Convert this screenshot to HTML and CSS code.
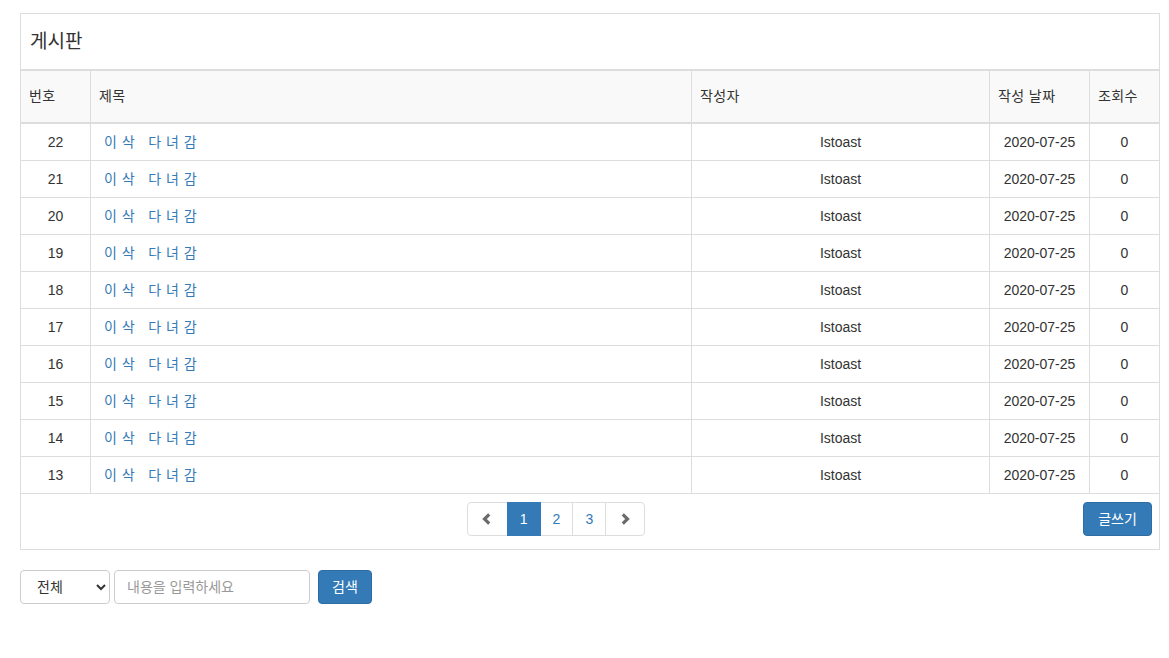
FILE: index.html
```html
<!DOCTYPE html>
<html lang="ko">
<head>
<meta charset="utf-8">
<title>게시판</title>
<link rel="stylesheet" href="styles.css">
</head>
<body>
<div class="page">
  <div class="panel">
    <div class="panel-heading">게시판</div>
    <table class="board">
      <thead>
        <tr>
          <th class="c-no">번호</th>
          <th class="c-title">제목</th>
          <th class="c-writer">작성자</th>
          <th class="c-date">작성 날짜</th>
          <th class="c-hit">조회수</th>
        </tr>
      </thead>
      <tbody>
        <tr><td class="center">22</td><td class="title"><a href="#">이 삭&nbsp;&nbsp; 다 녀 감</a></td><td class="center">Istoast</td><td class="center">2020-07-25</td><td class="center">0</td></tr>
        <tr><td class="center">21</td><td class="title"><a href="#">이 삭&nbsp;&nbsp; 다 녀 감</a></td><td class="center">Istoast</td><td class="center">2020-07-25</td><td class="center">0</td></tr>
        <tr><td class="center">20</td><td class="title"><a href="#">이 삭&nbsp;&nbsp; 다 녀 감</a></td><td class="center">Istoast</td><td class="center">2020-07-25</td><td class="center">0</td></tr>
        <tr><td class="center">19</td><td class="title"><a href="#">이 삭&nbsp;&nbsp; 다 녀 감</a></td><td class="center">Istoast</td><td class="center">2020-07-25</td><td class="center">0</td></tr>
        <tr><td class="center">18</td><td class="title"><a href="#">이 삭&nbsp;&nbsp; 다 녀 감</a></td><td class="center">Istoast</td><td class="center">2020-07-25</td><td class="center">0</td></tr>
        <tr><td class="center">17</td><td class="title"><a href="#">이 삭&nbsp;&nbsp; 다 녀 감</a></td><td class="center">Istoast</td><td class="center">2020-07-25</td><td class="center">0</td></tr>
        <tr><td class="center">16</td><td class="title"><a href="#">이 삭&nbsp;&nbsp; 다 녀 감</a></td><td class="center">Istoast</td><td class="center">2020-07-25</td><td class="center">0</td></tr>
        <tr><td class="center">15</td><td class="title"><a href="#">이 삭&nbsp;&nbsp; 다 녀 감</a></td><td class="center">Istoast</td><td class="center">2020-07-25</td><td class="center">0</td></tr>
        <tr><td class="center">14</td><td class="title"><a href="#">이 삭&nbsp;&nbsp; 다 녀 감</a></td><td class="center">Istoast</td><td class="center">2020-07-25</td><td class="center">0</td></tr>
        <tr><td class="center">13</td><td class="title"><a href="#">이 삭&nbsp;&nbsp; 다 녀 감</a></td><td class="center">Istoast</td><td class="center">2020-07-25</td><td class="center">0</td></tr>
      </tbody>
    </table>
    <div class="panel-footer">
      <div class="pager-wrap">
        <ul class="pagination">
          <li><a href="#" class="chev chev-prev"><svg width="12" height="12" viewBox="0 0 12 12"><path d="M8.2 1.3 L3.5 6 L8.2 10.7" fill="none" stroke="#6b6b6b" stroke-width="3.2"/></svg></a></li>
          <li><a href="#" class="num active">1</a></li>
          <li><a href="#" class="num">2</a></li>
          <li><a href="#" class="num">3</a></li>
          <li><a href="#" class="chev"><svg width="12" height="12" viewBox="0 0 12 12"><path d="M3.8 1.3 L8.5 6 L3.8 10.7" fill="none" stroke="#6b6b6b" stroke-width="3.2"/></svg></a></li>
        </ul>
      </div>
      <button class="btn btn-primary" type="button">글쓰기</button>
    </div>
  </div>
  <form class="search">
    <select class="field select">
      <option>전체</option>
    </select>
    <input class="field input" type="text" placeholder="내용을 입력하세요">
    <button class="btn btn-primary btn-search" type="button">검색</button>
  </form>
</div>
</body>
</html>
```

FILE: styles.css
```css
* { box-sizing: border-box; }
html, body { margin: 0; padding: 0; background: #fff; }
body {
  font-family: "Liberation Sans", "Noto Sans CJK KR", sans-serif;
  font-size: 14px;
  line-height: 20px;
  color: #333;
}
.page { padding: 13px 0 0 20px; }
.panel {
  width: 1140px;
  border: 1px solid #ddd;
  background: #fff;
}
.panel-heading {
  height: 57px;
  padding: 0 9px;
  display: flex;
  align-items: center;
  font-size: 19px;
  border-bottom: 2px solid #ddd;
}
.board {
  width: 1138px;
  table-layout: fixed;
  border-collapse: separate;
  border-spacing: 0;
}
.board th, .board td {
  border-right: 1px solid #ddd;
  line-height: 20px;
  font-weight: normal;
  text-align: left;
}
.board th:last-child, .board td:last-child { border-right: 0; }
.board th {
  background: #f9f9f9;
  padding: 15px 8px 16px;
  border-bottom: 2px solid #ddd;
  letter-spacing: 0.4px;
}
.board td {
  padding: 8px;
  border-bottom: 1px solid #ddd;
}
.c-no { width: 70px; }
.c-title { width: 601px; }
.c-writer { width: 298px; }
.c-date { width: 100px; }
.c-hit { width: 69px; }
.board td.center { text-align: center; }
.board td.title { padding-left: 13px; }
.board a { color: #337ab7; text-decoration: none; letter-spacing: 0.5px; }
.panel-footer {
  display: flex;
  align-items: flex-start;
  padding: 8px 7px 13px 8px;
  height: 55px;
}
.pager-wrap { flex: 1; display: flex; justify-content: center; }
.pagination {
  display: flex;
  list-style: none;
  margin: 0;
  padding: 0;
}
.pagination li a {
  display: flex;
  align-items: center;
  justify-content: center;
  height: 34px;
  padding: 6px 12px;
  margin-left: -1px;
  border: 1px solid #ddd;
  color: #337ab7;
  text-decoration: none;
  background: #fff;
}
.pagination li:first-child a { margin-left: 0; border-radius: 4px 0 0 4px; }
.pagination li:last-child a { border-radius: 0 4px 4px 0; }
.pagination li a.chev { width: 40px; padding: 6px 0; }
.pagination li a.chev-prev { width: 41px; }
.pagination li a.active {
  background: #337ab7;
  border-color: #337ab7;
  color: #fff;
  position: relative;
  z-index: 1;
}
.btn {
  font-family: inherit;
  font-size: 14px;
  line-height: 20px;
  height: 34px;
  padding: 6px 12px;
  border-radius: 4px;
  border: 1px solid transparent;
  cursor: pointer;
}
.btn-primary {
  background: #337ab7;
  border-color: #2e6da4;
  color: #fff;
}
.panel-footer .btn { width: 69px; padding: 6px 0; }
.search {
  display: flex;
  margin-top: 20px;
}
.field {
  height: 34px;
  border: 1px solid #ccc;
  border-radius: 4px;
  font-family: inherit;
  font-size: 14px;
  color: #555;
  background: #fff;
}
.select { width: 90px; padding: 0 8px 0 12px; color: #333; }
.input { width: 196px; margin-left: 4px; padding: 6px 12px; }
.input::placeholder { color: #999; }
.btn-search { width: 54px; margin-left: 8px; padding: 6px 0; }
```
